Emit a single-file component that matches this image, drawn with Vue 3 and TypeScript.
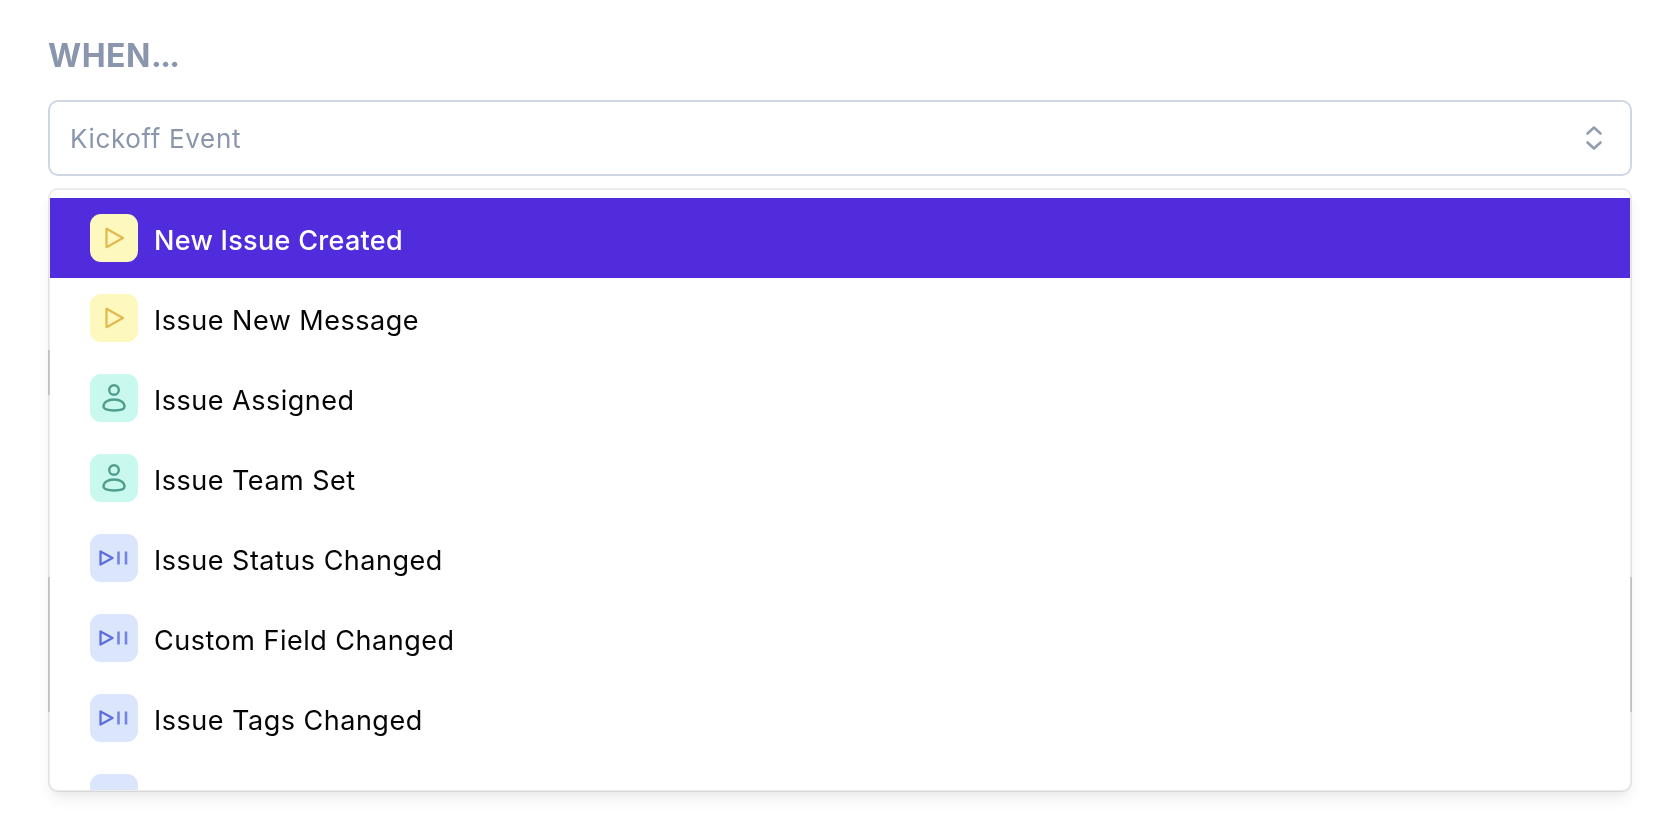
<script setup lang="ts">
type Kind = 'play' | 'user' | 'status'

const items: { label: string; kind: Kind }[] = [
  { label: 'New Issue Created', kind: 'play' },
  { label: 'Issue New Message', kind: 'play' },
  { label: 'Issue Assigned', kind: 'user' },
  { label: 'Issue Team Set', kind: 'user' },
  { label: 'Issue Status Changed', kind: 'status' },
  { label: 'Custom Field Changed', kind: 'status' },
  { label: 'Issue Tags Changed', kind: 'status' },
  { label: 'Issue SLA Changed', kind: 'status' },
]
</script>

<template>
  <div class="page">
    <div class="label">WHEN<span class="dots">...</span></div>
    <div class="field">
      <button class="select" type="button">
        <span>Kickoff Event</span>
        <svg class="chevrons" width="20" height="30" viewBox="0 0 20 30" fill="none">
          <path d="M3.500 10.500 10 4.500l6.500 6M3.500 19.500l6.500 6 6.500-6" stroke="#939db0" stroke-width="2.600" stroke-linecap="round" stroke-linejoin="round" />
        </svg>
      </button>
      <!-- fields of the form behind the open menu, only their edges show -->
      <div class="behind short"></div>
      <div class="behind tall"></div>
      <div class="menu">
        <ul class="list">
          <li v-for="(item, index) of items" :key="item.label" class="row" :class="{ active: index === 0 }">
            <span class="badge" :class="item.kind">
              <svg v-if="item.kind === 'play'" width="24" height="24" viewBox="0 0 24 24" fill="none">
                <path d="M4.500 2.800 21 12 4.500 21.200Z" stroke="#e2b84f" stroke-width="2.200" stroke-linejoin="round" />
              </svg>
              <svg v-else-if="item.kind === 'user'" width="26" height="30" viewBox="0 0 26 30" fill="none">
                <circle cx="13" cy="7" r="4.800" stroke="#4f9d8f" stroke-width="2.400" />
                <path d="M2.500 23.500c0-4 4-7 10.500-7s10.500 3 10.500 7c0 2.500-4 4-10.500 4s-10.500-1.500-10.500-4Z" stroke="#4f9d8f" stroke-width="2.400" />
              </svg>
              <svg v-else width="30" height="16" viewBox="0 0 30 16" fill="none">
                <path d="M1.500 1.500 13.500 8 1.500 14.500Z" stroke="#5b6ee0" stroke-width="2.300" stroke-linejoin="round" />
                <path d="M19.500 1.500v13M27 1.500v13" stroke="#7385e0" stroke-width="2.600" />
              </svg>
            </span>
            <span class="name">{{ item.label }}</span>
          </li>
        </ul>
      </div>
    </div>
  </div>
</template>

<style scoped>
.page {
  width: 1666px;
  height: 818px;
  overflow: hidden;
  box-sizing: border-box;
  padding: 36px 34px 0 48px;
  background: #fff;
  font-family: Inter, "Noto Sans", sans-serif;
  filter: blur(0.45px);
}

.label {
  font-size: 32px;
  line-height: 39px;
  font-weight: 700;
  letter-spacing: 0.5px;
  color: #8a96ad;
  margin-bottom: 25px;
}

.dots {
  letter-spacing: -1.500px;
}

.field {
  position: relative;
}

.select {
  display: flex;
  align-items: center;
  justify-content: space-between;
  width: 100%;
  height: 76px;
  box-sizing: border-box;
  padding: 0 26px 0 20px;
  border: 2px solid #cfd6e4;
  border-radius: 10px;
  background: #fff;
  font: inherit;
  font-size: 26px;
  letter-spacing: 0.65px;
  color: #8a96ad;
}

.behind {
  position: absolute;
  left: 0;
  right: 0;
  border-left: 2px solid #dadbdf;
  border-right: 2px solid #dadbdf;
}

.behind.short {
  top: 250px;
  height: 45px;
  border-right: 0;
}

.behind.tall {
  top: 477px;
  height: 135px;
}

.menu {
  position: absolute;
  top: 88px;
  left: 0;
  right: 0;
  height: 604px;
  box-sizing: border-box;
  padding-top: 8px;
  overflow: hidden;
  background: #fff padding-box;
  border: 2px solid rgba(0, 0, 0, 0.08);
  border-radius: 10px;
  box-shadow: 0 10px 15px -3px rgba(0, 0, 0, 0.07), 0 4px 6px -2px rgba(0, 0, 0, 0.03);
}

.list {
  list-style: none;
  margin: 0;
  padding: 0;
}

.row {
  display: flex;
  align-items: center;
  gap: 16px;
  height: 80px;
  padding-left: 40px;
  font-size: 27px;
  letter-spacing: 0.5px;
  color: #050506;
}

.name {
  position: relative;
  top: 2px;
}

.row.active {
  background: #512cdc;
  color: #fff;
  font-weight: 550;
  letter-spacing: 0.3px;
}

.badge {
  display: flex;
  align-items: center;
  justify-content: center;
  width: 48px;
  height: 48px;
  flex-shrink: 0;
  border-radius: 11px;
}

.play {
  background: #fdf8bd;
}

.user {
  background: #c9f8ee;
}

.status {
  background: #dbe6fd;
}
</style>

<style>
html,
body {
  background: #fff;
}
</style>
